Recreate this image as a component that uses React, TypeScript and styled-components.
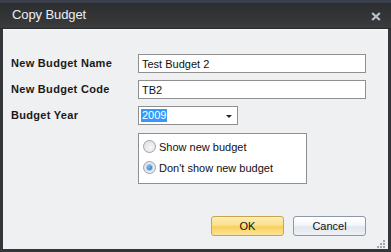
import React from "react";
import styled, { createGlobalStyle } from "styled-components";

const Global = createGlobalStyle`
  html, body { margin: 0; padding: 0; background: #ffffff; }
  body { font-family: "Liberation Sans", Arial, sans-serif; }
  * { box-sizing: border-box; }
`;

const Window = styled.div`
  width: 391px;
  height: 252px;
  display: flex;
  flex-direction: column;
  background: #333539;
`;

const TitleBar = styled.div`
  height: 29px;
  flex: none;
  display: flex;
  align-items: center;
  justify-content: space-between;
  padding: 3px 10px 0 12px;
  border-top: 3px solid #3b3f4b;
  background: linear-gradient(#2c2d2f, #3a3b3d);
  border-bottom: 1px solid #2a2b2d;
`;

const Title = styled.span`
  color: #e9eef6;
  font-size: 13px;
  letter-spacing: -0.1px;
  margin-top: -5px;
`;

const CloseIcon = styled.svg`
  width: 10px;
  height: 9px;
  margin-top: -2px;
`;

const Body = styled.div`
  flex: 1;
  display: flex;
  flex-direction: column;
  margin: 0 3px 3px 3px;
  background: #eff0f2;
  border-top: 1px solid #f8f9fa;
  padding: 24px 22px 13px 8px;
  position: relative;
`;

const Form = styled.div`
  display: grid;
  grid-template-columns: 127px 1fr;
  row-gap: 7px;
  align-items: center;
`;

const Label = styled.label`
  font-weight: bold;
  font-size: 11px;
  color: #1a1a1a;
  letter-spacing: 0.3px;
  margin-top: -2px;
`;

const TextBox = styled.div`
  height: 19px;
  border: 1px solid #8f8f8f;
  background: #fff;
  font-size: 11px;
  color: #111;
  display: flex;
  align-items: center;
  padding-left: 3px;
`;

const Combo = styled.div`
  width: 100px;
  height: 19px;
  border: 1px solid #8f8f8f;
  background: #fff;
  display: flex;
  align-items: center;
  justify-content: space-between;
  padding: 0 5px 0 2px;
  font-size: 11px;
`;

const Selected = styled.span`
  background: #3399ff;
  color: #fff;
  padding: 0 1px;
  line-height: 13px;
`;

const Arrow = styled.span`
  width: 0;
  height: 0;
  border-left: 3px solid transparent;
  border-right: 3px solid transparent;
  border-top: 3px solid #222;
  margin-top: 1px;
`;

const RadioGroup = styled.div`
  grid-column: 2;
  width: 169px;
  height: 51px;
  margin-top: 1px;
  border: 1px solid #8f8f8f;
  background: #fff;
  display: flex;
  flex-direction: column;
  justify-content: flex-start;
  gap: 8px;
  padding: 6px 0 0 4px;
`;

const RadioRow = styled.div`
  display: flex;
  align-items: center;
  gap: 3px;
  font-size: 11px;
  color: #111;
  height: 13px;
`;

const RadioCircle = styled.span<{ $checked?: boolean }>`
  width: 13px;
  height: 13px;
  border-radius: 50%;
  border: 1px solid #9da3aa;
  background: radial-gradient(circle at 60% 60%, #f6f6f6, #d9dbde);
  display: flex;
  align-items: center;
  justify-content: center;
  &::after {
    content: "";
    display: ${(p) => (p.$checked ? "block" : "none")};
    width: 5px;
    height: 5px;
    border-radius: 50%;
    background: radial-gradient(circle at 40% 40%, #7fc0f0, #1f5f9e);
    box-shadow: 0 0 0 1px #9cc8ea;
  }
`;

const Footer = styled.div`
  margin-top: auto;
  display: flex;
  justify-content: flex-end;
  gap: 9px;
`;

const Button = styled.button<{ $primary?: boolean }>`
  width: 73px;
  height: 20px;
  border-radius: 3px;
  font-family: "Liberation Sans", Arial, sans-serif;
  font-size: 11px;
  color: #111;
  padding: 0;
  border: 1px solid ${(p) => (p.$primary ? "#c9a64e" : "#8e98a6")};
  background: ${(p) =>
    p.$primary
      ? "linear-gradient(#fdeeb4 0%, #fbe08a 45%, #f8d05a 55%, #fbe39b 100%)"
      : "linear-gradient(#ffffff 0%, #f4f6f9 45%, #e2e7ee 55%, #eef1f5 100%)"};
`;

const Grip = styled.svg`
  position: absolute;
  right: 3px;
  bottom: 1px;
  width: 9px;
  height: 9px;
`;

export default function App() {
  return (
    <>
      <Global />
      <Window>
        <TitleBar>
          <Title>Copy Budget</Title>
          <CloseIcon viewBox="0 0 10 9">
            <path d="M1.2 1 L8.8 8 M8.8 1 L1.2 8" stroke="#b9c1cd" strokeWidth="2.3" />
          </CloseIcon>
        </TitleBar>
        <Body>
          <Form>
            <Label>New Budget Name</Label>
            <TextBox>Test Budget 2</TextBox>
            <Label>New Budget Code</Label>
            <TextBox>TB2</TextBox>
            <Label>Budget Year</Label>
            <Combo>
              <Selected>2009</Selected>
              <Arrow />
            </Combo>
            <RadioGroup>
              <RadioRow>
                <RadioCircle />
                Show new budget
              </RadioRow>
              <RadioRow>
                <RadioCircle $checked />
                Don't show new budget
              </RadioRow>
            </RadioGroup>
          </Form>
          <Footer>
            <Button $primary>OK</Button>
            <Button>Cancel</Button>
          </Footer>
          <Grip viewBox="0 0 9 9">
            <g fill="#a0a4aa">
              <rect x="7" y="1" width="2" height="2" />
              <rect x="4" y="4" width="2" height="2" />
              <rect x="7" y="4" width="2" height="2" />
              <rect x="1" y="7" width="2" height="2" />
              <rect x="4" y="7" width="2" height="2" />
              <rect x="7" y="7" width="2" height="2" />
            </g>
          </Grip>
        </Body>
      </Window>
    </>
  );
}
